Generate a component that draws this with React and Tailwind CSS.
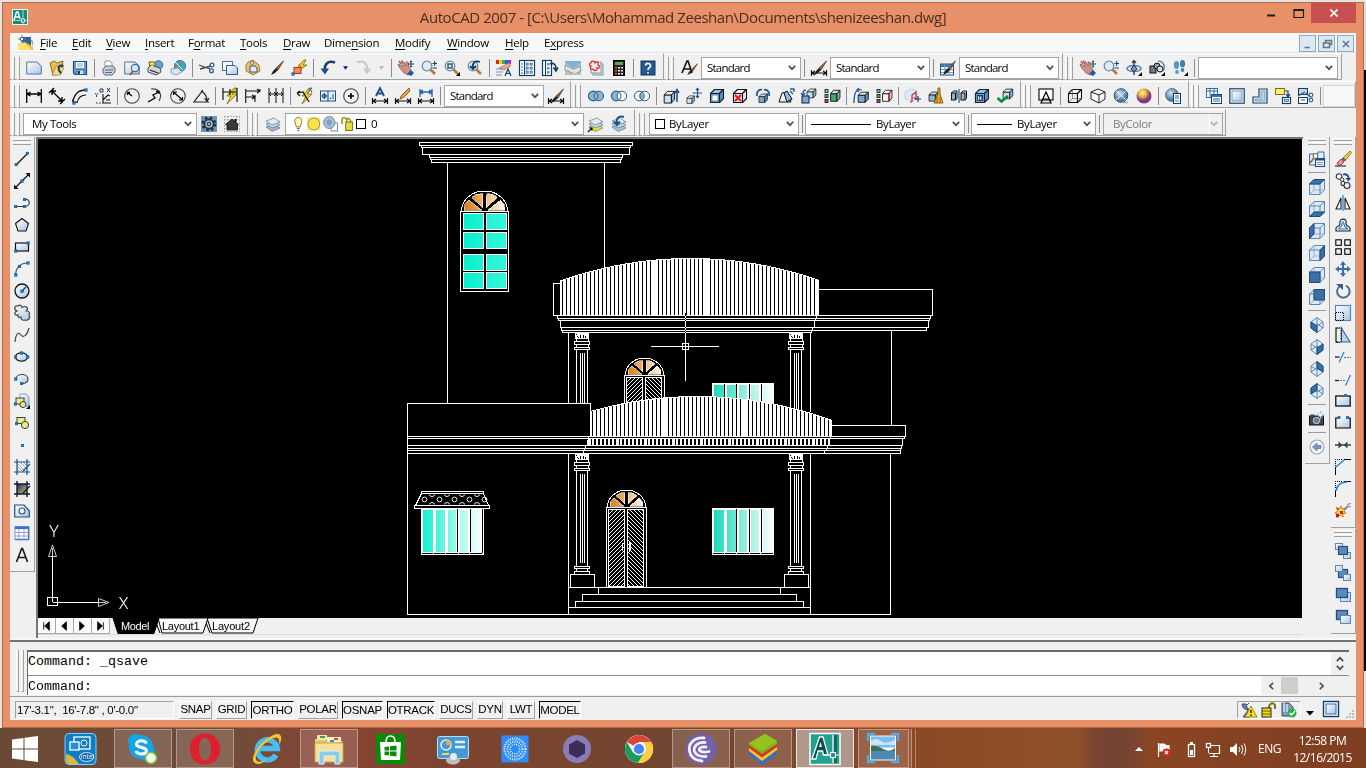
import React from "react";

const N = "#123e66";
const B = "#2f6ca8";
const P = "#b9d3ea";
const DOT = "#1583d8";

const R = (x, y, w, h, f = "none", s = "none", sw = 1, k) => (
  <rect key={k} x={x} y={y} width={w} height={h} fill={f} stroke={s} strokeWidth={sw} />
);
const D = (d, s = "#111", f = "none", sw = 1.2, k) => (
  <path key={k} d={d} stroke={s} fill={f} strokeWidth={sw} />
);
const C = (x, y, r, f = "none", s = "none", sw = 1, k) => (
  <circle key={k} cx={x} cy={y} r={r} fill={f} stroke={s} strokeWidth={sw} />
);
const Dot = (x, y, k) => R(x - 1.25, y - 1.25, 2.5, 2.5, DOT, "#0a4a88", 0.5, k);
const Corner = <path d="M16 12V16H12Z" fill="#000" />;

const cube = (front, top, side, stroke = "#111") => (
  <g stroke={stroke} strokeWidth="1.1" strokeLinejoin="round">
    <path d="M1.5 5.5H10.5V14.5H1.5Z" fill={front} />
    <path d="M1.5 5.5L5.5 1.5H14.5L10.5 5.5Z" fill={top} />
    <path d="M10.5 5.5L14.5 1.5V10.5L10.5 14.5Z" fill={side} />
  </g>
);
const viewCube = (face) => (
  <g stroke="#5c88b4" strokeWidth="1" strokeLinejoin="round">
    <path d="M.5 5L5 .5H15.5V11L11 15.5H.5Z" fill="#dce9f5" />
    <path d="M5 .5V11H15.5M5 11L.5 15.5" fill="none" stroke="#93b3d1" />
    <path d="M.5 5H11V15.5M11 5L15.5 .5" fill="none" />
    <path d={face} fill="#3d6fa5" stroke="#1d4c80" />
  </g>
);
const isoCube = (face) => (
  <g stroke="#5c88b4" strokeWidth="1" strokeLinejoin="round">
    <path d="M8 .5L14 5V11L8 15.5L2 11V5Z" fill="#e0ecf6" />
    <path d="M2 5L8 9L14 5M8 9V15.5M8 .5V7L2 11M8 7L14 11" fill="none" />
    <path d={face} fill="#3b6ea3" stroke="#1d4c80" />
  </g>
);
const hand = (
  <g>
    <path d="M1 1L3 4M3.500 .5L5 4" stroke="#a8665c" strokeWidth="1.6" />
    <path d="M0 4L3 5L5 7L4 2L6 2L8 6L8 2L10 2L11 7L13 10V13L10 15L6 13L1 7Z" fill="#cf9186" stroke="#8a544c" strokeWidth=".7" />
    <path d="M9 14L13 10L16 13L13 16Z" fill="#1e5c9a" />
    <path d="M13 1V7M10 4H16M12 2L13 .8L14 2M12 6L13 7.2L14 6" stroke={N} fill="none" strokeWidth="1" />
  </g>
);
const lens = (
  <g>
    <path d="M9.5 9.5L14 14" stroke="#c07830" strokeWidth="2.6" />
    <circle cx="6" cy="6" r="4.8" fill="#dcecf8" stroke="#6e8aa4" strokeWidth="1.3" />
  </g>
);
const brush = (
  <g>
    <path d="M15.5 1L8 8L10 10Z" fill="#a06a3c" stroke="#5a3418" strokeWidth=".8" />
    <path d="M8 8L10 10L7 13L3 15L5 11Z" fill="#222" />
  </g>
);
const dimBar = D("M.5 10V16M15.5 10V16M1 13H15M4 11L1 13L4 15M12 11L15 13L12 15", "#111");
const bolt = D("M12 0L5 8L9 8L5 16L15 6L10 6L15 0Z", "#6b5a00", "#f0d818", 0.7);
const pairs = () => [1.5, 6.5, 11.5].map((y, i) => R(1, y, 3, 3, ["#7cc4f0", "#4ec04e", "#d04040"][i], "#222", 0.9, y));
const doc = D("M.7 2H11L15.3 6V14H.7Z", "#4a78a4", "url(#face)", 1);
const lay = (f) => (
  <g stroke="#5a7590" strokeWidth=".7">
    <path d="M1 11L9 8L15 12L7 15.5Z" fill={f} />
    <path d="M1 8L9 5L15 9L7 12Z" fill="#c8daea" />
    <path d="M1 5L9 2L15 6L7 9Z" fill="#e3edf6" />
  </g>
);

const ICONS = {
  new: doc,
  open: (<g>{D("M1 3L5 1L8 3L14 1L12 14L4 15Z", "#8a6a20", "#e9bd4e", 1)}{D("M3 15L7 6L15 8L11 15Z", "#a58230", "#f7dc88", 0.8)}{D("M14.500 6C9 4 8 9 12 13", N, "none", 2)}</g>),
  save: (<g>{D("M1.5 1.5H14.5V14.5H3L1.5 13Z", "#1d4f85", "#6a9cca", 1.2)}{R(4, 2, 8, 6, "#f0f5fa")}{D("M5 4H11M5 6H11", "#7a98b4", "none", 0.8)}{R(5, 10, 7, 4.5, "#d5e2ee", "#1d4f85", 0.8)}{R(6, 11, 2, 3, N)}</g>),
  print: (<g>{D("M4 7V1H9L11 3V7", "#8a94b0", "#fff", 1)}{D("M2 9L5 6H12L14 8V12L11 15H4L2 13Z", "#5a6888", "#c8d0e2", 1)}{D("M4 10H12M4 12.500H11", "#5a6888", "#eef", 1)}{C(11.500, 9, 1, "#d8a020")}</g>),
  preview: (<g>{doc}<path d="M9 11L6 15" stroke="#a06020" strokeWidth="2" />{C(11, 8, 3.6, "#d8ebf8", "#48688a", 1.1)}</g>),
  publish: (<g>{C(11.5, 5, 4.3, "#58a8d8", "#1c5080", 0.8)}{D("M2 2H8V7H3Z", "#705818", "#ffe060", 1)}{D("M1 8L4 5L13 8L14 12L9 15L1 12Z", "#4a4a4a", "#d0d5dc", 1)}{D("M3 10L11 13", "#222", "none", 1.3)}{R(4, 4, 3, 2, "#e8b820")}</g>),
  globe: (<g>{C(10, 6, 5.6, "#3ba7c9", "#2168a0", 0.8)}{D("M8 1C12 3 11 6 7 6S6 10 10 12", "#c84848", "#62c070", 1)}{D("M5 2L13 10", "#d8eef8", "none", 1)}{D("M1 9L8 8L12 12L6 15L1 13Z", "#7892a8", "#d8e4ee", 0.8)}</g>),
  cut: (<g>{D("M0 5L11 9M1 9L12 6", "#445", "none", 1.3)}{C(13, 5, 1.9, "none", "#34589c", 1.3)}{C(12.5, 10.8, 1.9, "none", "#34589c", 1.3)}</g>),
  copy: (<g>{R(0.5, 1.5, 10, 9, "#eef4fa", "#4a78a4", 1)}{D("M4.5 5.5H13L15.5 8V14.5H4.5Z", "#2f5f90", "url(#face)", 1)}</g>),
  paste: (<g>{D("M3 2L8 0L14 5L15 11L8 15L1 11V5Z", "#a58238", "#eabf65", 1)}{D("M5 6H10L12 8V12H5Z", "#2f5f90", "#e2eef8", 1)}{C(7, 3, 1.5, "#f0f0f0", "#666", 0.8)}</g>),
  match: brush,
  block: (<g>{D("M13 0L7 6L10 6L7 11L16 5L12 5L15 0Z", "#8a6400", "#f7c928", 0.8)}{R(3, 7.5, 7, 6, "#f58a60", "#a03818", 1)}{Dot(2, 14)}</g>),
  undo: (<g>{D("M15 2.500C8 0 4 4 5 11", "#1c3f6a", "none", 2.6)}{D("M.5 8.500H9L5 14.500Z", "none", "#1c4f86", 0)}</g>),
  redo: (<g>{D("M1 2.500C8 0 12 4 11 11", "#c6cacd", "none", 2.2)}{D("M15.500 8.500H7L11 14.500Z", "none", "#c6cacd", 0)}</g>),
  pan: hand,
  zoom: (<g>{lens}{D("M11.5 3.5H16M13.7 1V6M11.5 8H16", N, "none", 1)}</g>),
  zoomwin: (<g>{lens}{R(4, 4, 4, 4, "none", N, 1.2)}{Corner}</g>),
  zoomprev: (<g>{lens}{D("M13 2C8 0 5 3 6 8M3 6L6 9L9 6", N, "none", 1.8)}</g>),
  props: (<g>{R(0, 0, 3, 4, "#e82020")}{R(3, 0, 3, 4, "#f0d020")}{R(6, 0, 3, 4, "#20c040")}{R(9, 0, 3, 4, "#2060e8")}{R(12, 0, 3, 4, "#c020c0")}{D("M3 8L13 3L15 6L8 10Z", "#b07868", "#e8a898", 0.8)}{D("M0 9H7M0 12H7M0 15H6", "#88b", "none", 1)}{D("M9 16L12 9L15 16M10 13.5H14", N, "none", 1.2)}</g>),
  dc: (<g>{R(0.5, 0.5, 15, 15, "#fff", N, 1.2)}{D("M5.5 1V15", N, "none", 1)}{D("M2 4H4M2 7H4M2 10H4M2 13H4", B, "none", 1.2)}{[7, 11].map((x) => [3, 7, 11].map((y) => R(x, y, 2.2, 2.2, "#8fb6dc", N, 0.5, x + y)))}</g>),
  palettes: (<g>{R(0.5, 0.5, 9, 15, "#fff", N, 1.2)}{D("M3.5 1V15", N, "none", 1)}{R(5, 3, 2.5, 2.5, "#5b93c8")}{R(5, 7, 2.5, 2.5, "#5b93c8")}{R(5, 11, 2.5, 2.5, "#5b93c8")}{D("M8 4C12 2 14 5 14 9M11.5 7.5L14 11L16 7.5", N, "none", 1.6)}</g>),
  sheets: (<g>{R(0, 1, 16, 14, "#a5c8dc")}{D("M0 2L8 8L16 3V1H0Z", "none", "#7fb2d2", 0)}{D("M0 5L9 9L15 6L16 11L10 14L0 10Z", "#8796a2", "#dde2e4", 1)}{R(0, 13, 16, 2, "#b8c4a0")}</g>),
  markup: (<g>{R(5, 4, 10, 11, "#dce6f0", "#8090a0", 1)}{R(3, 2, 10, 11, "#f0f4f8", "#8090a0", 1)}{D("M3 3C1 3 1 6 3 6C1 8 3 10 5 9C6 12 10 10 9 8C12 9 12 5 10 5C11 2 8 1 7 3C6 0 3 1 3 3Z", "#e22020", "#ffe8e8", 1.2)}</g>),
  calc: (<g>{R(2.5, 0.5, 11, 15, "#222", "#000", 1)}{R(4, 2, 8, 3, "#5aa850")}{[4, 7, 10].map((x) => [7, 10, 13].map((y) => R(x, y, 2, 1.5, x === 4 ? "#e05050" : "#eee", "none", 1, x * y)))}</g>),
  help: (<g>{R(1, 1, 14, 14, "#24598f", "#10345c", 1)}{D("M5.5 5.5C6 2.5 11 3 10.5 6C10 7.5 8 8 8 10M8 12V13.5", "#fff", "none", 1.7)}</g>),
  tstyle: (<g>{D("M1 13L6 1H7L11 13M3 9H9", "#111", "none", 1.6)}<g transform="translate(4 3) scale(.8)">{brush}</g></g>),
  dstyle: (<g>{brush}{dimBar}</g>),
  tablestyle: (<g>{R(0.5, 4, 13, 11, "#fff", "#1d4f90", 1)}{R(0.5, 4, 13, 3, "#3b74b8")}{D("M1 9.500H13M1 12.500H13M5 5V15M9 5V15", "#6b9ad0")}{brush}</g>),
  orbit: (<g>{D("M8 0V15M6 3L8 .5L10 3", "#345", "none", 1.4)}<ellipse cx="8" cy="8.5" rx="7" ry="3" fill="none" stroke="#4a86c0" strokeWidth="1.6" />{D("M5 9L8 5L11 9L8 12Z", "#235", "#88a", 1)}{Corner}</g>),
  swivel: (<g>{R(1, 6, 6, 7, "#778", "#111")}{C(8, 6, 3, "#99a", "#111")}{C(11, 9, 3, "#dde", "#111")}{D("M9 1C14 1 17 6 14 11", B)}{Corner}</g>),
  walk: (<g><ellipse cx="4.5" cy="5" rx="2.6" ry="4" fill="#5897bd" /><ellipse cx="10.5" cy="3.8" rx="2.6" ry="3.8" fill="#3f7fa8" /><ellipse cx="5" cy="12" rx="1.8" ry="2" fill="#5897bd" /><ellipse cx="10.5" cy="10" rx="1.8" ry="2" fill="#3f7fa8" />{Corner}</g>),
  dLinear: D("M.7 1V15M15.3 1V15M1 6H15M4.5 4L1 6L4.5 8M11.5 4L15 6L11.5 8", "#000", "none", 1.3),
  dAligned: D("M0 5L5 0M11 16L16 11M3 3L13 13M3 7V3H7M13 9V13H9", "#000", "none", 1.4),
  dArc: (<g>{D("M1 14C2 6 6 2 14 2", "#111", "none", 1.3)}{D("M5 15C6 10 9 7 14 7M1 11V14H5", "#111", "none", 1.1)}{Dot(2, 15)}{Dot(14, 2)}</g>),
  dOrd: (<g>{D("M8 6V15H16M8 12L13 7L15 8M11 12H15", "#111", "none", 1.1)}{D("M5 1H8V4H5ZM12 0L15 4M15 0L12 4", N, "none", 1)}<path d="M0 5L1.500 7L3 5M1.500 7V9M1 15H8" stroke="#446" fill="none" strokeDasharray="2 1" /></g>),
  dRad: (<g>{C(8, 8, 7.3, "none", "#444", 1.1)}{D("M8 8L3.5 4.5M3.5 7V4.5H6", "#000", "none", 1.3)}</g>),
  dJog: (<g>{D("M4 1C12 0 16 6 12 13", "#444", "none", 1.1)}{D("M1 14L8 10L6 7L12 4M9 3.5H12V6", "#000", "none", 1.3)}</g>),
  dDia: (<g>{C(8, 8, 7.3, "none", "#444", 1.1)}{D("M3.5 4L12.5 12M3.5 7V4H7M12.5 9V12H9", "#000", "none", 1.2)}</g>),
  dAng: D("M16 14H1L10 2M8 3C12 5 14 9 14 13M11.5 10L14 13.5L16 10", "#222", "none", 1.2),
  dQuick: (<g>{bolt}{D("M1 0V12M15 0V14M1 4H15M8 1V7", "#111", "none", 1.2)}</g>),
  dBase: D("M.7 1V15M.7 3H15M12 1L15 3L12 5M1 9H10M10 7V14M7 7L10 9L7 11M15 3V1", "#111", "none", 1.1),
  dCont: D("M1 0V15M8 0V15M15 0V15M1 6H15M3 4L1 6L3 8M13 4L15 6L13 8M6 4L8 6L6 8M10 4L8 6L10 8", "#111", "none", 1),
  qLeader: (<g>{bolt}{D("M0 5L6 4L12 14M0 5L3 3M0 5L3 8", "#111", "none", 1.2)}{D("M11 5L13 0L15 5", B, "none", 1)}</g>),
  tol: (<g>{R(0.5, 3, 15, 10, "#e8f1f9", "#1d4f85", 1)}{D("M8 3V13M4.3 5V11M1.5 8H7M13 6V11", "#1d4f85", "none", 1.1)}{C(4.3, 8, 2, "none", "#1d4f85", 1)}{D("M10.500 11V9.800", "#1d4f85", "none", 1.4)}</g>),
  center: (<g>{C(8, 8, 7.3, "none", "#444", 1.1)}{D("M8 5V11M5 8H11", "#000", "none", 1.6)}</g>),
  dEdit: (<g>{D("M4 8L8 0L12 8M5.5 5.5H10.5", "#1b4f90", "none", 1.9)}{dimBar}</g>),
  dtEdit: (<g>{D("M14 0L6 8L5 11L8 10L15 3Z", "#7a4a10", "#e8a040", 0.8)}{dimBar}</g>),
  dUpdate: (<g>{D("M2 1V9M14 1V9M2 4H14M5 2L2 4L5 6M11 2L14 4L11 6", "#2460a8", "none", 1.3)}{dimBar}</g>),
  union: (<g>{C(5.2, 8, 4.8, "#8bb6d2", "#2b5f88")}{C(10.8, 8, 4.8, "#8bb6d2", "#2b5f88")}{C(5.2, 8, 4.8, "none", "#2b5f88")}</g>),
  subtract: (<g>{C(5.2, 8, 4.8, "#8bb6d2", "#2b5f88")}{C(10.8, 8, 4.8, "#f4f8fb", "#2b5f88")}{C(5.2, 8, 4.8, "none", "#2b5f88")}</g>),
  intersect: (<g>{C(5.2, 8, 4.8, "#f4f8fb", "#2b5f88")}{C(10.8, 8, 4.8, "#f4f8fb", "#2b5f88")}{D("M8 4A4.8 4.8 0 0 1 8 12A4.8 4.8 0 0 1 8 4", "#2b5f88", "#8bb6d2", 1)}</g>),
  extrude: (<g><g transform="translate(0 2) scale(.8 .9)">{cube("#cfe0ef", "#eaf2f9", "#8db2d4")}</g>{D("M14 14V3M12 5L14 1.5L16 5", "#1d5a9a", "none", 1.6)}</g>),
  moveF: (<g><g transform="translate(0 7) scale(.58)">{cube("#cfe0ef", "#eaf2f9", "#8db2d4")}</g>{D("M11.5 0V10M6.5 5H16M10 2L11.5 .3L13 2M10 8L11.5 9.7L13 8", "#1d5a9a", "none", 1.2)}</g>),
  offsetF: (<g>{cube("#79a8d2", "#9cc1e2", "#5c90c2", "#123")}{R(3, 7, 6, 6, "#fff", "#46749e", 0.8)}</g>),
  delF: (<g>{cube("#f8dcdc", "#eef4fa", "#dce6f0")}{D("M3 7L9 13M9 7L3 13", "#d82020", "none", 2)}</g>),
  rotF: (<g><g transform="translate(3 5) scale(.65)">{cube("#79a8d2", "#cfe0ef", "#5c90c2")}</g>{D("M2 8C1 3 5 1 7 2M14 8C15 4 12 1 9 2", "#1d5a9a", "none", 1.8)}</g>),
  taperF: (<g>{D("M1 14L4 5L9 4L13 14ZM9 4L14 12", "#111", "#eef3f8", 1)}{D("M9 14L6 5L9 3L14 11Z", "#111", "#8fb6dc", 1)}{D("M12 3L15 6M12 1H16V4", "#1d5a9a", "none", 1.3)}</g>),
  copyF: (<g><g transform="translate(5 0) scale(.68)">{cube("#cfe0ef", "#eaf2f9", "#8db2d4")}</g>{R(1, 8, 7, 7, "#79a8d2", "#123")}{D("M5 2C2 2 2 4 2 7M0 5L2 8L4 5", "#1d5a9a", "none", 1.3)}</g>),
  colorF: (<g>{pairs()}<g transform="translate(5.500 1) scale(.72 .85)">{cube("#3fa86a", "#cfe0ef", "#8db2d4")}</g></g>),
  copyE: (<g><g transform="translate(4 3) scale(.78)">{cube("#79a8d2", "#cfe0ef", "#5c90c2")}</g>{D("M9 2C3 0 1 5 1 15M6 0L4 2L6 4", "#1d5a9a", "none", 1.3)}</g>),
  colorE: (<g>{pairs()}<g transform="translate(5.500 1) scale(.72 .85)">{cube("#fff", "#fff", "#fff")}</g>{D("M13.5 4.500V12", "#e02020", "none", 1.6)}</g>),
  imprint: (<g>{D("M0 4L6 1L12 3V10L7 13L0 11Z", "#b8d4ec", "#dceaf6", 1)}{D("M7 14V7L11 4V12M7 14H5M11 10H8", "#c82040", "none", 1.2)}{D("M13 8V14M10 11H16", N, "none", 1.2)}</g>),
  clean: (<g><g transform="translate(0 3) scale(.7)">{cube("#8fb4d6", "#cfe0ef", "#5c90c2")}</g>{D("M10 0H12V6L15 15H6L10 6Z", "#8a5a10", "#e8b030", 1)}{D("M9 9V15M12 9V15", "#a06010", "none", 1)}</g>),
  separate: (<g>{R(0.5, 5, 4, 7, "#8db2d4", "#111")}{D("M.5 5L2.500 3H6V10L4.500 12", "#111", "none", 1)}{R(10, 5, 4, 7, "#8db2d4", "#111")}{D("M10 5L12 3H15.500V10L14 12", "#111", "none", 1)}{D("M8 1V15", "#1d5a9a", "none", 1.2)}</g>),
  shell: (<g>{cube("#6fa2cf", "#9cc1e2", "#5c90c2", "#123")}{R(3.5, 7.5, 5, 5, "#c8dcee", "#123", 0.8)}{R(5.5, 8.5, 2, 3, "#fff", "#123", 0.6)}</g>),
  check: (<g><g transform="translate(5 0) scale(.74)">{cube("#cfe0ef", "#eaf2f9", "#8db2d4")}</g>{D("M.5 10L4.500 13.500L11 8", "#0a8a38", "none", 2.6)}</g>),
  vs2d: (<g>{R(1, 1, 14, 11, "#fff", "#000", 1.1)}{D("M3 15L8 4L13 15ZM5 11H11", "#000", "none", 1.2)}</g>),
  vs3dw: (<g>{cube("#e8eff7", "#fff", "#fff")}{D("M5.5 1.5V10.5H14.5M5.5 10.5L1.5 14.5", "#667", "none", 0.7)}</g>),
  vs3dh: D("M8 1L15 4V11L9 15L1 11V4ZM1 4L9 7L15 4M9 7V15", "#222", "#fff", 1),
  vsreal: (<g>{C(8, 7.5, 6.8, "url(#ball)", "#234", 0.8)}{D("M3 3L13 12M13 3L3 12", "#e4f0fa", "none", 1)}{D("M9 14.500H15", "#aaa", "none", 1.5)}</g>),
  vsconc: C(8, 8, 7.5, "url(#gold)"),
  vsman: (<g>{C(7, 7, 6.5, "url(#ball)", "#567", 0.8)}{R(8.5, 5.5, 7, 10, "#fff", N)}{D("M10 8H14M10 10H14M10 13H14", B, "none", 1.2)}</g>),
  vp1: (<g>{R(0.5, 0.5, 11, 9, "#fff", B)}{D("M.5 3H11M4 1V9M8 1V9", B, "none", 1)}{R(5.5, 6.5, 10, 9, "#fff", N)}{R(5.5, 6.5, 10, 2.4, B)}{D("M7 11H14M7 13H14", B)}</g>),
  vp2: (<g>{R(0.8, 0.8, 14.4, 14.4, "#fff", N, 1.2)}{R(3, 3, 10, 10, "url(#face)", "#6f9ac4", 1)}</g>),
  vp3: (<g>{D("M7 1H15V15H1V9H7Z", N, "#fff", 1.2)}{D("M9 3H13V13H3V11H9Z", "#6f9ac4", P, 1)}</g>),
  vp4: (<g>{R(0.5, 0.5, 9, 6, "#ffe97a", "#857000")}{D("M10 3H13V8M11 6L13 9L15 6", N)}{R(7.5, 9.5, 8, 6, "#fff", N, 1.2)}{R(9.5, 11.5, 4, 2, P, B, 0.8)}</g>),
  vp5: (<g>{R(0.5, 0.5, 9, 6, P, N)}{R(0.5, 9.5, 9, 6, "#fff", N)}{D("M0 8L7 4M8 5L12 9M3 12H7", "#456")}{C(13, 7, 1.8, "none", B, 1.2)}{C(13, 12, 1.8, "none", B, 1.2)}</g>),
  gear: (<g>{R(0, 0, 16, 16, "#6f93b6")}<circle cx="8" cy="8" r="6.300" fill="none" stroke="#1d2d3d" strokeWidth="2.2" strokeDasharray="2.500 2.450" />{C(8, 8, 4.6, "#b4bec8", "#1d2d3d", 1.6)}{C(8, 8, 1.9, "#8fb0cf", "#1d2d3d", 1)}</g>),
  home: (<g><path d="M.5 0V16M15.500 0V16M0 .5H16M0 15.500H16M3.500 0V16M12.500 0V16M0 3.500H16M0 12.500H16" stroke="#9aa4ae" strokeWidth=".8" strokeDasharray="2 1" />{D("M1.500 8.500L8 3L14.500 8.500H13.500V14H3V8.500Z", "#111", "#3a3a3a", 0.8)}{R(10.5, 3, 2, 3, "#111")}</g>),
  layers: lay("#9fb6cc"),
  layermake: (<g>{lay("#f0e020")}{D("M0 16L4 12M1.5 12H4V14.5", "#111", "none", 1.2)}</g>),
  layerprev: (<g>{lay("#a8bfd4")}{D("M13 1C7 -1 5 3 6 8M3 5.5L6 9L9 5.5", "#1c4f86", "none", 2)}</g>),
  line: (<g>{D("M2 14L14 2", "#111", "none", 1.2)}{Dot(2.2, 13.6)}{Dot(13.4, 2.4)}</g>),
  xline: (<g>{D("M1 15L15 1", "#111", "none", 1.2)}{D("M0 16V11.500L4.500 16ZM16 0V4.500L11.500 0Z", "none", "#111", 0)}{Dot(8, 8)}</g>),
  pline: (<g>{D("M2 11.500H10M10 4C17 4 17 11.500 10 11.500", "#333", "none", 1.1)}{Dot(1.6, 11.5)}{Dot(10.5, 11.5)}{Dot(10.5, 4.500)}</g>),
  polygon: D("M8 1.5L14.5 6.5L12 14H4L1.5 6.5Z", "#111", "url(#face)", 1.1),
  rect: (<g>{R(1.5, 4, 13, 8, "url(#face)", "#111", 1.2)}{Dot(1.8, 12)}{Dot(14.2, 4)}</g>),
  arc: (<g>{D("M1.5 14C2 7 6 2 14 2", "#555", "none", 1.2)}{Dot(1.8, 14)}{Dot(5.5, 5.5)}{Dot(14, 2)}</g>),
  circle: (<g>{C(8, 8, 7, "url(#face)", "#111", 1.3)}{D("M8 8L12 4", N, "none", 1.2)}{Dot(8, 8.3)}</g>),
  cloud: D("M3 6C-1 4 1 0 4 1C6 -1 8 1 8 2.500C12 0 15 3 12.500 6C15 6 16.500 8 15 10C17 13 14 16 11 15C8 16 7 14 7 12C5 13 3 11.500 4 10C0 11 0 7 3 6Z", "#444", "url(#face)", 1.2),
  spline: D("M1 15C2 5 5 5 7 8S13 9 15 1", "#444", "none", 1.2),
  ellipse: (<g><ellipse cx="7.5" cy="8" rx="6" ry="4.2" fill="url(#face)" stroke="#222" strokeWidth="1.2" />{Dot(1.5, 8)}{Dot(13.8, 8)}{Dot(7.5, 4)}</g>),
  earc: (<g>{D("M2 8C2 2 14 2 14 8C14 12 10 12.5 8 12.3", "#444", "url(#face)", 1.2)}{Dot(1.8, 8)}{Dot(7.6, 12.5)}</g>),
  insert: (<g>{D("M6 1H12L15 4V13H6Z", "#7fa0c0", "url(#face)", 1)}{R(2, 5, 8, 6, "#f4ec7a", "#345")}{C(9, 11.5, 3, "#ece884", "#345")}{Dot(1.4, 11)}{Corner}</g>),
  mkblock: (<g>{R(3, 2.5, 8, 6, "#f4ec7a", "#345")}{C(11, 10, 3.6, "#ece884", "#345")}{Dot(2.5, 8.6)}</g>),
  point: Dot(8.5, 8.5),
  hatch: (<g>{R(3, 3, 10, 10, "#fff")}{D("M3 4L12 13M3 7L9 13M3 10L6 13M6 3L13 10M9 3L13 7", "#579", "none", 0.7)}{D("M0 3H16M0 13H16M3 0V16M13 0V16M9 12L16 5", "#1c4f86", "none", 1.2)}</g>),
  gradient: (<g>{R(3, 3, 10, 10, "url(#dark)")}{D("M0 3H16M0 13H16M3 0V16M13 0V16M9 12L16 5", "#0a1c30", "none", 1.4)}</g>),
  region: (<g>{D("M.7 2H10L15.3 8V14H.7Z", "#1c4f86", "url(#face)", 1.2)}{C(8, 8, 3, "#e6eff8", "#456", 1.1)}</g>),
  table: (<g>{R(1, 1.5, 14, 13, "#fff", "#7d98cc", 1)}{R(1, 1.5, 14, 2.6, "#3a6fe0")}{D("M1 7.500H15M1 11H15M5 4V14M10 4V14", "#8ba4d4", "none", 1)}{D("M14.500 2V15M1 14.500H15", "#5a74a8", "none", 1.3)}</g>),
  mtext: D("M2.500 15L7.700 1.500H8.500L13.500 15M4.500 10.500H11.500", "#1a1a1a", "none", 1.6),
  nview: (<g>{D("M.5 3H9V1H15V14H.5Z", "#3a6b9c", "#e4eef7", 1)}{R(6.5, 7.5, 9, 8, "#fff", "#1c4f86", 1.1)}{R(6.5, 7.5, 9, 2, "#1c4f86")}{D("M8 11.500H14M8 13.500H14", "#5a8fc4", "none", 0.9)}{C(6.500, 5, 2.5, "#fff", "#555")}{D("M5 7L1 12", "#a06030", "none", 1.6)}</g>),
  top: viewCube("M.5 5L5 .5H15.5L11 5Z"),
  bottom: viewCube("M.5 15.5L5 11H15.5L11 15.5Z"),
  left: viewCube("M.5 5L5 .5V11L.5 15.5Z"),
  right: viewCube("M11 5L15.5 .5V11L11 15.5Z"),
  front: viewCube("M.5 5H11V15.5H.5Z"),
  back: viewCube("M5 .5H15.5V11H5Z"),
  sw: isoCube("M2 5L8 9V15.5L2 11Z"),
  se: isoCube("M8 9L14 5V11L8 15.5Z"),
  ne: isoCube("M8 .5L14 5V11L8 7Z"),
  nw: isoCube("M8 .5L2 5V11L8 7Z"),
  camera: (<g>{R(0.5, 5, 14, 9, "#3a4856", "#111")}{R(1.500, 3.500, 4, 2, "#445")}{C(7.500, 9.5, 3.2, "#6a7a8a", "#c8d0da")}{D("M11.500 0V8M7.500 4H15.500M9 1.5L14 6.5M14 1.5L9 6.5", "#8cc4f0", "none", 1)}{C(11.5, 4, 1.6, "#fff")}</g>),
  vback: (<g>{C(8, 8, 7, "#f6f9fc", "#8da4ba", 1.1)}{D("M3.5 8L8 4V6.5H12V9.5H8V12Z", "#5f7f9f", "#7d9bb8", 0.8)}</g>),
  erase: (<g>{D("M15 0L16.500 1.500L10 10L7 8Z", "#806010", "#f0cc40", 0.8)}{D("M6 8L9 11L6 14H3L2 12Z", "#a84a58", "#ec9494", 1)}{D("M7.5 7L10 9.5", "#46608a", "none", 2.2)}{D("M0 15H11", "#111", "none", 1)}</g>),
  copyobj: (<g>{C(4, 3.500, 2.8, "#fff", "#333", 1.1)}{C(7, 6.500, 1.8, "#fff", "#333")}{D("M8 1.500C12 .5 14 3 13.5 6", "#1c4f86", "none", 1.8)}{D("M10.500 5H16L13.500 8.500Z", "none", "#1c4f86", 0)}{C(8, 10.500, 2, "#fff", "#333", 1.1)}{C(12, 12.5, 3, "#e4ecf4", "#333", 1.1)}</g>),
  mirror: (<g>{D("M6 3V14H1ZM10 3V14H15Z", "#222", "#f5f5f5", 1.1)}{D("M8 0V16", "#1c7cd8", "none", 1.2)}</g>),
  offset: (<g>{D("M1 14V11C1 9 5 10 5 7C3 1 13 0 11 7C11 10 15 9 15 11V14Z", "#222", "none", 1.1)}{D("M3.5 12H13C13 11 9 11 9 7C9 4 7 4 7 7C7 10 4 11 3.5 12", "#1c7cd8", "none", 1.1)}</g>),
  array: (<g>{R(0.8, 0.8, 5.5, 5.5, "#eef3f8", "#000", 1.1)}{R(9.8, 0.8, 5.5, 5.5, "#eef3f8", "#000", 1.1)}{R(0.8, 9.8, 5.5, 5.5, "#eef3f8", "#000", 1.1)}{R(9.8, 9.8, 5.5, 5.5, "#eef3f8", "#000", 1.1)}</g>),
  move: (<g>{D("M8 2V14M2 8H14", "#3a6ea5", "none", 2)}{D("M5 4L8 0L11 4ZM5 12L8 16L11 12ZM4 5L0 8L4 11ZM12 5L16 8L12 11Z", "none", "#3a6ea5", 0)}</g>),
  rotate: (<g>{D("M5 3A6.3 6.3 0 1 0 11 2.6", "#4a6e94", "none", 2)}{D("M1 1H8V7Z", "none", "#3a6088", 0)}</g>),
  scale: (<g>{R(0.5, 0.5, 15, 15, "url(#face)", "#5a82a8", 1.1)}<path d="M1 7.500H8.500V15M.5 8V15.500H8" fill="none" stroke="#000" strokeDasharray="1 1" /></g>),
  stretch: (<g>{D("M6.500 1L15 15H6.500Z", "#3a6490", P, 1.1)}<path d="M6 .5V15.500H1" fill="none" stroke="#000" strokeDasharray="1.3 1.3" />{D("M5 1H1V15H4", "#000", "none", 1.1)}</g>),
  trim: (<g>{D("M0 8H4.500", "#111", "none", 1.2)}{D("M4 13.500L9 3", "#2f7cc8")}<path d="M9 8.500H16" stroke="#2f7cc8" strokeWidth="1" strokeDasharray="2 1" /></g>),
  extend: (<g>{D("M0 9.500H4", "#111", "none", 1.2)}<path d="M5 9.500H11" stroke="#2f7cc8" strokeWidth="1" strokeDasharray="2 1" />{D("M10.500 14.500L15.5 4", "#2f7cc8")}</g>),
  breakpt: (<g>{R(0.8, 3, 14.4, 10, "url(#face)", "#000", 1.2)}{R(9, 1, 3, 3, "#3a6ea5")}</g>),
  breakk: (<g>{D("M4 3H.8V13H15.2V3H13", "#000", "url(#face)", 1.2)}{R(2.5, 1, 3, 3, "#3a6ea5")}{R(11, 1, 3, 3, "#3a6ea5")}</g>),
  join: (<g>{D("M0 8H16", "#111")}{D("M3.500 4.500L7.500 8L3.500 11.500ZM12.500 4.500L8.500 8L12.500 11.500Z", "none", "#2c4660", 0)}</g>),
  chamfer: (<g>{D("M.5 8V16M9 .5H16", "#000", "none", 1)}{D("M1 8L9 1", "#1c7cd8", "none", 1.3)}<path d="M.5 7V.5H8" fill="none" stroke="#000" strokeDasharray="1 1" /></g>),
  fillet: (<g>{D("M.5 9V16M9 .5H16", "#000", "none", 1)}{D("M1 10C2 4 5 1 12 1", "#1c7cd8", "none", 1.5)}<path d="M.5 7V.5H8" fill="none" stroke="#000" strokeDasharray="1 1" /></g>),
  explode: (<g>{D("M1 4L4 6L6 3L7 6L10 5L9 8L11 10L8 11L8 14L5 12L2 15L3 11L0 10L3 8Z", "#c86010", "#f8dc50", 0.8)}{R(1, 11, 3, 3, "#d01818")}{R(5, 8, 3, 3, "#e02020")}{R(2, 5, 2, 2, "#e84020")}{D("M9 7L13 3", "#888", "none", 2)}{D("M12 1.500L16 .5M13 3L16 4", "#777", "none", 0.9)}</g>),
  df1: (<g>{R(0.5, 0.5, 7, 6, "url(#face)", "#5a88b4")}{R(8.5, 9.5, 7, 6, "url(#face)", "#5a88b4")}{R(3.5, 3.5, 9, 8, "#5b89ba", "#234f80", 1.2)}</g>),
  df2: (<g>{R(3.5, 4.5, 9, 8, "#5b89ba", "#234f80", 1.2)}{R(0.5, 0.5, 7, 6, "url(#face)", "#5a88b4")}{R(8.5, 9.5, 7, 6, "url(#face)", "#5a88b4")}</g>),
  df3: (<g>{R(5.5, 5.5, 10, 9, "url(#face)", "#5a88b4")}{R(1.5, 1.5, 11, 9, "#5b89ba", "#234f80", 1.3)}</g>),
  df4: (<g>{R(1.5, 1.5, 11, 9, "#5b89ba", "#234f80", 1.3)}{R(5.5, 6.5, 10, 8, "url(#face)", "#5a88b4")}</g>),
};

const Icon = ({ n }) => (
  <svg viewBox="0 0 16 16" className="h-4 w-4 shrink-0 overflow-visible">{ICONS[n]}</svg>
);
const Cell = ({ n }) => (
  <div className="flex h-[22px] w-[23px] shrink-0 items-center justify-center"><Icon n={n} /></div>
);
const Cells = ({ l }) =>
  l.split(" ").map((n, i) =>
    n === "|" ? <Sep key={i} /> : n === "v" || n === "w" ? <Tri key={i} off={n === "w"} /> : <Cell key={i} n={n} />
  );
const Sep = () => (
  <div className="flex h-[22px] w-1.5 shrink-0 justify-center py-0.5"><div className="w-px bg-[#8c8c8c]" /></div>
);
const Tri = ({ off }) => (
  <div className="flex h-[22px] w-[13px] shrink-0 items-center justify-center">
    <svg viewBox="0 0 6 4" className="h-[4px] w-[5px]"><path d="M0 0H6L3 4Z" fill={off ? "#b4b4b8" : "#10107c"} /></svg>
  </div>
);
const Grip = () => (
  <div className="ml-px flex h-[23px] w-[11px] shrink-0 gap-[2px] pl-px">
    <div className="w-[3px] border-r border-l border-r-[#a0a0a0] border-l-white" />
    <div className="w-[3px] border-r border-l border-r-[#a0a0a0] border-l-white" />
  </div>
);
const Chevron = ({ off }) => (
  <svg viewBox="0 0 8 6" className="h-[6px] w-[8px] shrink-0"><path d="M.8 .8L4 4.2L7.2 .8" fill="none" stroke={off ? "#b5b5b5" : "#505050"} strokeWidth="1.7" /></svg>
);
const Combo = ({ w, children, off }) => (
  <div className={`${w} ${off ? "bg-[#f0f0f0] text-[#7c7c7c]" : "bg-white text-black"} flex h-[22px] shrink-0 items-center justify-between border border-[#a5a5a8] pr-[4px] pl-[5px]`}>
    <div className="flex h-full min-w-0 flex-1 items-center whitespace-nowrap">{children}</div>
    <Chevron off={off} />
  </div>
);
const Bar = ({ w, children }) => (
  <div className={`${w} flex h-[27px] shrink-0 items-start border-t border-r border-b border-t-white border-r-[#a0a0a0] border-b-[#a0a0a0] pt-[3px]`}>
    <Grip />
    {children}
  </div>
);
const Swatch = () => <div className="h-[10px] w-[10px] shrink-0 border border-black bg-white" />;

const VGrip = () => (
  <div className="mx-[3px] mb-[3px] flex h-[8px] shrink-0 flex-col gap-[1px] pt-px">
    <div className="h-[3px] border-t border-b border-t-white border-b-[#a0a0a0]" />
    <div className="h-[3px] border-t border-b border-t-white border-b-[#a0a0a0]" />
  </div>
);
const VBar = ({ h, l }) => (
  <div className={`${h} flex w-[25px] shrink-0 flex-col border-r border-b border-r-[#a0a0a0] border-b-[#a0a0a0] bg-[#f0f0f0]`}>
    <VGrip />
    {l.split(" ").map((n, i) =>
      n === "|" ? (
        <div key={i} className="flex h-1.5 shrink-0 items-center px-[3px] pb-px"><div className="h-px w-full bg-[#9a9a9a]" /></div>
      ) : (
        <div key={i} className="flex h-[22px] shrink-0 items-center justify-center pr-px"><Icon n={n} /></div>
      )
    )}
  </div>
);

const MENUS = [
  ["", "F", "ile", "w-[32px]"], ["", "E", "dit", "w-[34px]"], ["", "V", "iew", "w-[39px]"], ["", "I", "nsert", "w-[43px]"],
  ["F", "o", "rmat", "w-[52px]"], ["", "T", "ools", "w-[43px]"], ["", "D", "raw", "w-[41px]"], ["Dime", "n", "sion", "w-[71px]"],
  ["", "M", "odify", "w-[52px]"], ["", "W", "indow", "w-[58px]"], ["", "H", "elp", "w-[39px]"], ["E", "x", "press", "w-[60px]"],
];

const arcY = (x, cx, top) => Math.round(top + 389 - Math.sqrt(389 * 389 - (x - cx) * (x - cx)));
function Canopy({ x0, x1, cx, top, base, solid }) {
  const bars = [];
  for (let x = x0; x <= x1; x += 1) {
    const y = arcY(x, cx, top);
    const black = (x - x0) % 4 === 2 && x < x1 - 1 && !solid.includes(x);
    bars.push(<rect key={x} x={x} y={y} width="1" height={black ? 1 : base - y} fill="#fff" />);
    if (black) bars.push(<rect key={`b${x}`} x={x} y={y + 1} width="1" height={base - y - 1} fill="#000" />);
  }
  return <g>{bars}</g>;
}
const box = (x0, y0, x1, y1) => <rect key={`${x0}-${y0}-${x1}`} x={x0 + 0.5} y={y0 + 0.5} width={x1 - x0} height={y1 - y0} fill="#000" stroke="#fff" />;
const vl = (x, y0, y1) => <path key={`v${x}-${y0}`} d={`M${x + 0.5} ${y0}V${y1}`} stroke="#fff" />;
const hl = (y, x0, x1) => <path key={`h${y}-${x0}`} d={`M${x0} ${y + 0.5}H${x1}`} stroke="#fff" />;

function Fan({ cx, base, rx, ry }) {
  const id = `fan${cx}`.replace(".", "-") + base;
  const p = (a, k) => `${(cx + Math.cos(a) * (rx - k)).toFixed(1)} ${(base - Math.sin(a) * (ry - k)).toFixed(1)}`;
  const cuts = [[3.1, 2.45, -3], [2.25, 1.67, -1.6], [1.47, 0.89, 1.6], [0.69, 0.04, 3]];
  return (
    <g>
      <defs>
        <linearGradient id={id} gradientUnits="userSpaceOnUse" x1={cx - rx} y1="0" x2={cx + rx} y2="0">
          <stop offset="0" stopColor="#da7b0e" /><stop offset=".2" stopColor="#e08c30" /><stop offset=".5" stopColor="#efb777" /><stop offset="1" stopColor="#fff" />
        </linearGradient>
      </defs>
      <path d={`M${cx - rx} ${base}A${rx} ${ry} 0 0 1 ${cx + rx} ${base}`} fill="#000" stroke="#fff" />
      {cuts.map(([a, b, dx], i) => (
        <path key={i} d={`M${cx + dx} ${base - (i === 1 || i === 2 ? 3 : 1)}L${p(a, 2.5)}L${p((a + b) / 2, 2)}L${p(b, 2.5)}Z`} fill={`url(#${id})`} stroke="#fff" strokeWidth=".6" />
      ))}
    </g>
  );
}
function Door({ x, top, y0, y1 }) {
  const lines = [];
  for (let y = y0 - 16; y < y1 + 16; y += 4) {
    lines.push(`M${x + 2} ${y + 16}L${x + 18} ${y}`);
    lines.push(`M${x + 21} ${y}L${x + 37} ${y + 16}`);
  }
  return (
    <g>
      <clipPath id={`d${x}`}><rect x={x + 2} y={y0 + 2} width="36" height={y1 - y0 - 3} /></clipPath>
      {box(x, y0, x + 40, y1)}
      <path d={lines.join("")} stroke="#fff" strokeWidth="1.15" fill="none" clipPath={`url(#d${x})`} />
      <rect x={x + 18.5} y={y0 + 1} width="2.5" height={y1 - y0 - 1} fill="#000" />
      <rect x={x + 2.5} y={y0 + 2.5} width="16" height={y1 - y0 - 3} fill="none" stroke="#fff" />
      <rect x={x + 21.5} y={y0 + 2.5} width="16" height={y1 - y0 - 3} fill="none" stroke="#fff" />
      <Fan cx={x + 20.5} base={y0} rx={19} ry={y0 - top} />
    </g>
  );
}
function Blinds({ x, y0, y1, cols, darks, g }) {
  return (
    <g>
      <rect x={x} y={y0} width="62" height={y1 - y0 + 1} fill="#fff" />
      {cols.map(([a, w], i) => <rect key={i} x={x + a} y={y0 + 2} width={w} height={y1 - y0 - 4} fill={`url(#${g})`} />)}
      {darks.map((a) => <rect key={a} x={x + a} y={y0 + 1} width="1" height={y1 - y0 - 3} fill="#000" />)}
      <path d={`M${x + 1} ${y1 - 0.5}H${x + 61}`} stroke="#000" />
      {[12, 24, 37, 48].map((a) => <rect key={`m${a}`} x={x + a} y={y1 - 1} width="1" height="1" fill="#fff" />)}
    </g>
  );
}
function Column({ x, y, end, foot }) {
  return (
    <g>
      <rect x={x - 1} y={y} width="14" height="6" fill="#fff" />
      <path d={`M${x + 1} ${y + 3}l2 2M${x + 4} ${y + 2}v3M${x + 7} ${y + 2}v3M${x + 10} ${y + 3}l-1 2M${x} ${y + 1}l1 1`} stroke="#000" fill="none" />
      {box(x, y + 5, x + 12, y + 9)}
      {box(x, y + 11, x + 12, y + 14)}
      {box(x, y + 16, x + 11, end)}
      {box(x - 2, y + 8, x + 13, y + 11)}
      {box(x - 2, y + 14, x + 13, y + 16)}
      {vl(x + 4, y + 20, end - 3)}{vl(x + 6, y + 20, end - 3)}{vl(x + 8, y + 20, end - 3)}
      {foot && <g>{box(x, end + 2, x + 11, end + 5)}{box(x - 2, end, x + 13, end + 2)}{box(x - 2, end + 5, x + 13, end + 8)}{box(x - 6, 574, x + 18, 587)}</g>}
    </g>
  );
}

function Drawing() {
  const COLS = [[2, 10], [15, 9], [27, 8], [39, 8], [51, 9]];
  const fringe = [];
  for (let x = 588; x < 829; x += 4) fringe.push(<rect key={x} x={x} y="439" width={x % 28 === 0 ? 3 : 2} height="6" fill="#fff" />);
  return (
    <svg viewBox="38 139 1264 479" className="block h-[479px] w-[1264px] bg-black" fill="none" shapeRendering="crispEdges">
      <defs>
        <linearGradient id="teal1" gradientUnits="userSpaceOnUse" x1="422" y1="0" x2="482" y2="0"><stop offset="0" stopColor="#10efcf" /><stop offset="1" stopColor="#fff" /></linearGradient>
        <linearGradient id="teal2" gradientUnits="userSpaceOnUse" x1="713" y1="0" x2="773" y2="0"><stop offset="0" stopColor="#17d9b8" /><stop offset="1" stopColor="#fff" /></linearGradient>
        <linearGradient id="pane" gradientUnits="userSpaceOnUse" x1="463" y1="0" x2="507" y2="0"><stop offset="0" stopColor="#08f0cc" /><stop offset="1" stopColor="#36f5dc" /></linearGradient>
      </defs>
      {/* tower */}
      {box(419, 142, 632, 145)}{box(421, 145, 630, 147)}{box(422, 147, 629, 154)}{box(429, 154, 622, 157)}{box(430, 157, 621, 159)}{box(431, 159, 620, 162)}
      {vl(447, 162, 403)}{vl(604, 162, 268)}
      {box(460, 211, 508, 291)}
      <Fan cx={484.5} base={211} rx={23} ry={20} />
      {[213, 232, 254, 272].map((y) => [463, 486].map((x) => <rect key={x + y} x={x + 0.5} y={y + 0.5} width="20" height="16" fill="url(#pane)" stroke="#fff" />))}
      {/* upper storey */}
      {vl(568, 332, 403)}{vl(810, 332, 412)}{vl(891, 330, 425)}
      {box(553, 283, 560, 315)}
      {box(818, 289, 932, 315)}
      {box(557, 315, 930, 318)}{box(558, 318, 929, 320)}{box(560, 320, 928, 327)}{box(561, 327, 926, 330)}{box(562, 330, 811, 332)}
      {vl(816, 315, 318)}{vl(815, 318, 320)}{vl(814, 320, 327)}{vl(812, 327, 330)}
      <Canopy x0={560} x1={818} cx={690} top={258} base={315} solid={[654, 706]} />
      <Column x={576} y={333} end={420} />
      <Column x={790} y={333} end={430} />
      <Door x={624} top={358} y0={375} y1={420} />
      <Blinds x={712} y0={383} y1={429} cols={COLS} darks={[12, 24, 37, 49]} g="teal2" />
      {/* lower storey */}
      {box(407, 403, 590, 436)}
      {box(831, 425, 905, 436)}
      {box(407, 436, 904, 438)}{box(407, 438, 902, 445)}{box(407, 445, 901, 448)}{box(407, 448, 900, 450)}{box(407, 450, 900, 453)}
      <Canopy x0={590} x1={831} cx={697} top={396} base={436} solid={[664, 744]} />
      {hl(436, 590, 832)}
      {fringe}
      {vl(588, 436, 440)}{vl(587, 440, 445)}{vl(585, 445, 448)}{vl(584, 448, 450)}{vl(583, 450, 453)}
      {vl(830, 436, 438)}{vl(829, 438, 445)}{vl(827, 445, 448)}{vl(826, 448, 450)}{vl(824, 450, 453)}
      {vl(407, 453, 614)}{vl(568, 453, 614)}{vl(810, 453, 614)}{vl(890, 453, 614)}{hl(614, 407, 891)}
      <Column x={576} y={454} end={566} foot />
      <Column x={790} y={454} end={566} foot />
      <Door x={606} top={490} y0={507} y1={587} />
      <path d="M622.5 543V551M629.5 542V552M630.5 543V551" stroke="#fff" /><path d="M624.5 544V551" stroke="#fff" />
      <Blinds x={712} y0={508} y1={554} cols={COLS} darks={[24, 37, 49]} g="teal2" />
      {/* steps */}
      {hl(587, 568, 811)}{hl(594, 582, 797)}{hl(601, 575, 804)}{hl(607, 568, 811)}
      {vl(598, 587, 594)}{vl(780, 587, 594)}{vl(582, 594, 601)}{vl(796, 594, 601)}{vl(575, 601, 607)}{vl(803, 601, 607)}
      {/* awning window */}
      <Blinds x={421} y0={508} y1={554} cols={[[2, 10], [15, 9], [27, 8], [39, 8], [50, 10]]} darks={[36, 49]} g="teal1" />
      <rect x="482" y="509" width="1" height="44" fill="#000" /><rect x="483" y="508" width="1" height="47" fill="#fff" />
      <path d="M421.5 493.5L415.5 505.5M483.5 493.5L488.5 505.5" stroke="#fff" />
      {box(421, 491, 483, 493)}{box(414, 505, 489, 508)}
      {[424, 439, 454, 469, 484].map((x) => <circle key={x} cx={x + 0.5} cy="499.5" r="2.4" stroke="#fff" shapeRendering="auto" strokeWidth=".9" />)}
      {[432, 447, 462, 477].map((x) => <path key={x} d={`M${x - 2.5} 494.500A2.500 2 0 0 0 ${x + 2.5} 494.500M${x - 2.5} 504.500A2.500 2 0 0 1 ${x + 2.5} 504.500`} stroke="#fff" shapeRendering="auto" strokeWidth=".9" />)}
      {/* crosshair */}
      <g className="mix-blend-difference" stroke="#fff"><path d="M685.5 313V343M685.5 350V381M651 346.5H682M689 346.5H719" /><rect x="682.5" y="343.5" width="6" height="6" /><path d="M685.5 344V349M683 346.5H688" /></g>
      {/* axis marker */}
      <g stroke="#fff"><rect x="47.5" y="597.5" width="10" height="8" /><path d="M52.5 602V556M52.5 602.5H98" /><path d="M48.5 556.5H56.5L52.5 545ZM98.5 598.5V606.5L109 602.5ZM52.500 556V548M98.500 602.500H106" shapeRendering="auto" strokeWidth=".8" /></g>
      <g fill="#fff" fontFamily="Roboto, sans-serif" fontWeight="300" fontSize="16.5"><text x="49" y="536.5">Y</text><text x="118.500" y="609">X</text></g>
    </svg>
  );
}

const Status = ({ t, w, on }) => (
  <div className={`${w} ${on ? "border-t-black border-l-black border-r-white border-b-white pt-[2px]" : "border-t-white border-l-white border-r-[#a0a0a0] border-b-[#a0a0a0]"} flex h-[18px] shrink-0 items-center justify-center border text-[11.5px] leading-none tracking-[-0.3px]`}>{t}</div>
);

const Task = ({ children, w = "w-[58px]", box, active }) => (
  <div className={`${w} ${active ? "border-[#efe4df] bg-[#b0978d]" : box ? "border-white/35 bg-white/15" : "border-transparent"} mr-1 flex h-[39px] shrink-0 items-center justify-center border`}>
    <svg viewBox="0 0 32 32" className="h-8 w-8 overflow-visible">{children}</svg>
  </div>
);

function Taskbar() {
  return (
    <div className="flex h-10 w-[1366px] items-start bg-[linear-gradient(90deg,#6b4937_0%,#724c39_18%,#8a4434_24%,#7d4531_32%,#71452f_50%,#8b4826_66%,#91502c_79%,#7a4530_80%,#704435_81.5%,#7a4430_83%,#8a4524_84%,#7e3e22_100%)] pt-px text-white">
      <div className="flex h-[39px] w-[48px] items-center pl-[12px]">
        <svg viewBox="0 0 26 26" className="h-[26px] w-[26px]"><path d="M0 3.5L11.5 2V12.5H0ZM12.5 1.8L26 0V12.5H12.5ZM0 13.5H11.5V24L0 22.5ZM12.5 13.5H26V26L12.5 24.2Z" fill="#fff" /></svg>
      </div>
      <div className="w-[4px]" />
      <Task>
        <rect x="0" y="0.500" width="31" height="31" rx="4" fill="#0f7cc6" stroke="#7ecff4" /><path d="M1 21Q8 22 14 31H4Q1 31 1 27Z" fill="#d9b93a" />
        <rect x="9" y="4" width="16" height="12" fill="none" stroke="#fff" strokeWidth="1.3" /><rect x="5" y="9" width="9" height="8" fill="#1f8ed8" stroke="#fff" strokeWidth="1.3" /><circle cx="19" cy="10" r="3" stroke="#fff" fill="none" />
        <ellipse cx="21.5" cy="24" rx="7" ry="4.500" fill="#1266b0" stroke="#fff" strokeWidth=".8" /><text x="16" y="26" fontSize="6.500" fill="#fff" fontFamily="Open Sans, sans-serif">intel</text>
      </Task>
      <Task box>
        <circle cx="14" cy="14" r="12" fill="#12a5e8" /><circle cx="8.5" cy="8.500" r="7.500" fill="#12a5e8" /><circle cx="20" cy="20" r="8" fill="#12a5e8" />
        <path d="M19.5 10.5C18 6.5 9 7 9.5 11.5C10 15.5 20 13.5 19.5 18C19 22 10.5 22 9 18" fill="none" stroke="#fff" strokeWidth="3" /><circle cx="24" cy="25" r="5.5" fill="#f4ffee" stroke="#7cc142" strokeWidth="1.5" />
      </Task>
      <Task box><path fillRule="evenodd" d="M16 0.500C25 0.500 31 7 31 16S25 31.500 16 31.500S1 25 1 16S7 0.500 16 0.500ZM16 4.500C12 4.500 10 10 10 16S12 27.500 16 27.500S22 22 22 16S20 4.500 16 4.500Z" fill="#e01e2c" /></Task>
      <Task>
        <path d="M25 22A10 10 0 1 1 26.300 15.500H9" fill="none" stroke="#49bdf2" strokeWidth="5.400" /><path d="M4 30C-4 25 13 4 25 1C32 0 31 7 28 12C29 6 27 3 23 5C13 8 1 23 6 28C9 30 13 28 16 26C11 31 7 32 4 30Z" fill="#f7c52c" />
      </Task>
      <Task box>
        <path d="M2 6H12L14 8H29V28H2Z" fill="#e8c76a" /><rect x="4" y="2" width="10" height="5" fill="#f4e3a4" /><rect x="7" y="3" width="5" height="2" fill="#3aa655" /><rect x="14" y="4" width="14" height="5" fill="#fff3c0" /><rect x="21" y="5" width="4" height="2" fill="#d84030" /><rect x="17" y="7" width="4" height="2" fill="#3f7fd0" />
        <path d="M2 10H30V29H2Z" fill="#f6e19a" stroke="#c9a64c" /><path d="M6 31V21Q6 18 9 18H24Q27 18 27 21V31H22V23H11V31Z" fill="#8ccbe8" stroke="#d9f1fb" />
      </Task>
      <Task><rect x="1" y="1" width="29" height="30" fill="#078c07" /><path d="M11 9Q11 3 15.500 3T20 9" fill="none" stroke="#fff" strokeWidth="1.600" /><path d="M5 9H26L25 27H6Z" fill="#fff" /><path d="M9.500 14L14 13.400V17.500H9.500ZM15 13.200L21.500 12.500V17.500H15ZM9.500 18.500H14V22.600L9.500 22ZM15 18.500H21.500V23.600L15 22.800Z" fill="#078c07" /></Task>
      <Task>
        <rect x="0.500" y="3.500" width="31" height="22" rx="2" fill="#4398d6" stroke="#b7def6" /><circle cx="9" cy="12" r="5" fill="none" stroke="#e4f2fb" strokeWidth="1.500" /><path d="M9 12V7A5 5 0 0 1 14 12Z" fill="#f2a63a" /><path d="M18 9H28M18 14H28" stroke="#dff0fb" strokeWidth="2.600" /><path d="M5 21H12" stroke="#f2d060" strokeWidth="2" /><ellipse cx="16" cy="27.500" rx="7" ry="4" fill="#b9bfc5" /><circle cx="16.500" cy="23.500" r="3.500" fill="#e8ebee" />
      </Task>
      <Task><rect x="2.500" y="2.500" width="27" height="27" fill="#2d8cf5" /><g fill="none" stroke="#d6e9ff" strokeDasharray="1.200 1.100"><circle cx="16" cy="16" r="10.500" strokeWidth="2.200" /><circle cx="16" cy="16" r="7.500" strokeWidth="1.800" /><circle cx="16" cy="16" r="4.800" strokeWidth="1.400" /></g></Task>
      <Task><circle cx="16" cy="16" r="14" fill="#8b7cb8" /><path d="M16 7L24 11.500V20.500L16 25L8 20.500V11.500Z" fill="#3a2e56" /></Task>
      <Task><circle cx="16" cy="16" r="14" fill="#fff" /><path d="M16 16L3.900 9A14 14 0 0 1 28.100 9H16Z" fill="#dc4437" /><path d="M3.900 9A14 14 0 0 0 15 30L21.500 19.500L16 22L10 19.500Z" fill="#1a9d58" /><path d="M28.200 9A14 14 0 0 1 15 30L22 19.500Q24 14 20 9Z" fill="#fecd40" /><circle cx="16" cy="16" r="6.500" fill="#f4f4f4" /><circle cx="16" cy="16" r="5.100" fill="#4285f4" /></Task>
      <Task box><circle cx="16" cy="16" r="15.500" fill="#7361ab" /><g fill="none" stroke="#f2effa" strokeWidth="2.800" strokeLinecap="round"><path d="M19 5C9 4 3 11 4.500 18Q6 27 17 28" /><path d="M20 9.500C12 9 8 14 9.500 18.500Q12 24 21 23.500" /><path d="M21 14C16 13.500 13.500 15 14.500 17.500Q17 20 24 18.500" /></g></Task>
      <Task box><path d="M2 22L15 31.500L30 21V17L2 18Z" fill="#2f6fd0" /><path d="M2 18L15 28L30 17V13L2 14Z" fill="#f6c71c" /><path d="M2 15L15 24.500L30 14V10L2 11Z" fill="#d8322c" /><path d="M2 10L18 1L30 8V11L15 21L2 12Z" fill="#7cb518" /><path d="M2 10L18 1L30 8L15 18Z" fill="#93c41c" /></Task>
      <Task active><rect x="1" y="0.500" width="30" height="31" fill="#23a08f" stroke="#fff" strokeWidth="1.500" /><path d="M3 26L10.500 4H14L19 22H14.500L13.500 18H9L7 26Z" fill="#0c4f49" stroke="#f2fffc" strokeWidth="1.300" /><path d="M10 14L11.500 9L13 14Z" fill="#e9fffa" /><path d="M26.500 2V30" stroke="#0f6b60" strokeWidth="3" /><path d="M24 2V30M15 22H30" stroke="#fff" strokeWidth="1.200" /><rect x="21.500" y="19.500" width="5" height="5" fill="#158f80" stroke="#fff" strokeWidth="1.200" /></Task>
      <Task w="w-[51px]" box><g transform="translate(-1 0)"><rect x="3" y="2.500" width="26" height="25" fill="#f4f8fa" /><rect x="4" y="3.500" width="24" height="11" fill="#7cbcf0" /><path d="M4 8Q10 4 14 8T28 7V12H4Z" fill="#c9e4f8" /><path d="M4 13Q9 12 16 16T28 15V20H4Z" fill="#3f7050" /><rect x="4" y="18" width="24" height="8.500" fill="#4a8ab4" /><path d="M1 8V1H8M24 1H31V8M1 22V29H8M24 29H31V22" fill="none" stroke="#52a8e6" strokeWidth="2.400" /></g></Task>
      <div className="-ml-1 flex h-[39px] w-[7px] gap-0.5"><div className="w-[3px] border-r border-white/35 bg-white/10" /><div className="w-[2px] border-r border-white/35" /></div>
      <div className="ml-auto flex h-[39px] items-center">
        <svg viewBox="0 0 120 20" className="h-5 w-[120px]" fill="none">
          <path d="M5 12H13L9 8Z" fill="#fff" />
          <path d="M28.500 4V18M30 5H34L36 6.500H39V12H30Z" stroke="#fff" fill="#fff" strokeWidth="1.200" /><circle cx="36.500" cy="13.500" r="4" fill="#e02424" /><path d="M35 12L38 15M38 12L35 15" stroke="#fff" strokeWidth="1.300" />
          <rect x="58.500" y="5.500" width="6" height="12" stroke="#fff" strokeWidth="1.300" /><path d="M60 4H63" stroke="#fff" strokeWidth="2" /><rect x="60" y="11" width="3" height="5" fill="#fff" />
          <path d="M81 6.500H89.500V14.500H79M84 14.500V17M80 17.500H88" stroke="#fff" strokeWidth="1.200" /><rect x="76.500" y="4.500" width="4" height="4" stroke="#fff" strokeWidth="1.200" /><path d="M78.500 9V14" stroke="#fff" />
          <path d="M100 8H103L107 4V17L103 13H100Z" fill="#fff" /><path d="M109 8Q111 10.500 109 13M111.500 6Q114.500 10.500 111.500 15M114 4.500Q117.500 10.500 114 16.500" stroke="#fff" />
        </svg>
        <div className="w-[38px] pl-[8px] font-['Open_Sans',sans-serif] text-[12px] tracking-[-0.5px]">ENG</div>
        <div className="w-[69px] text-center font-['Open_Sans',sans-serif] text-[12px] leading-[17px] tracking-[-0.5px]">
          <div>12:58 PM</div><div className="whitespace-nowrap">12/16/2015</div>
        </div>
        <div className="w-[9px]" />
      </div>
    </div>
  );
}

export default function App() {
  return (
    <div className="flex h-[768px] w-[1366px] flex-col overflow-hidden bg-[#e4e4e5] font-['Open_Sans','Noto_Sans',sans-serif] text-[11.5px] text-black">
      <svg className="absolute h-0 w-0">
        <defs>
          <linearGradient id="face" x1="0" y1="0" x2="1" y2="1"><stop offset="0" stopColor="#fff" /><stop offset="1" stopColor="#a9c6e2" /></linearGradient>
          <linearGradient id="dark" x1="0" y1="0" x2="1" y2="1"><stop offset="0" stopColor="#1a2a80" /><stop offset="1" stopColor="#d8c838" /></linearGradient>
          <radialGradient id="ball" cx=".4" cy=".35"><stop offset="0" stopColor="#cfe6f6" /><stop offset="1" stopColor="#4a7ca6" /></radialGradient>
          <radialGradient id="gold" cx=".4" cy=".3"><stop offset="0" stopColor="#fff6b0" /><stop offset=".5" stopColor="#f2b32c" /><stop offset="1" stopColor="#7a3a90" /></radialGradient>
        </defs>
      </svg>
      <div className="flex h-[728px] pt-[2px] pl-[2px]">
        <div className="flex h-[726px] w-[1362px] shrink-0 flex-col border border-[#b5683f] bg-[#e89068] px-[7px] pb-[7px]">
          <div className="flex h-[30px] shrink-0 items-start justify-between">
            <svg viewBox="0 0 16 16" className="mt-[6px] ml-[2px] h-4 w-4">
              <rect x=".5" y=".5" width="15" height="15" fill="#158a7a" stroke="#e6f5f2" /><path d="M2 11L4.500 3H6L8 10M3 8H7" stroke="#fff" strokeWidth="1.400" fill="none" /><path d="M11 1V15M1 11.500H15" stroke="#cfeee8" strokeWidth=".8" /><rect x="9.500" y="10" width="3" height="3" fill="#158a7a" stroke="#fff" strokeWidth=".9" />
            </svg>
            <div className="mt-[3px] ml-[87px] w-[540px] text-center text-[15px] leading-[22px] tracking-[-0.43px] whitespace-nowrap text-[#463026]">AutoCAD 2007 - [C:\Users\Mohammad Zeeshan\Documents\shenizeeshan.dwg]</div>
            <div className="flex h-5 items-start">
              <svg viewBox="0 0 60 20" className="h-5 w-[60px]"><path d="M16 12.500H24" stroke="#1c1c1c" strokeWidth="2" /><path d="M43 8V14.500H52.500V7M42.500 7H53" stroke="#1c1c1c" fill="none" strokeWidth="1.200" /><path d="M42.500 7H53" stroke="#1c1c1c" strokeWidth="2" /></svg>
              <div className="flex h-5 w-[45px] items-center justify-center bg-[#c75050]"><svg viewBox="0 0 8 8" className="h-2 w-2"><path d="M.5 .5L7.500 7.500M7.500 .5L.5 7.500" stroke="#fff" strokeWidth="1.600" /></svg></div>
            </div>
          </div>

          <div className="flex h-[687px] w-[1346px] shrink-0 flex-col overflow-hidden bg-[#f0f0f0]">
            <div className="flex h-5 shrink-0 items-center border-b border-[#e2e2e6] bg-[#f5f7f9]">
              <svg viewBox="0 0 16 16" className="ml-2 h-4 w-4"><rect x="4" y="2" width="9" height="9" fill="#2f6294" /><path d="M4 0V8M0 4H8" stroke="#5a8cbc" strokeWidth="1" /><circle cx="4" cy="4" r="1.800" fill="#fff" stroke="#2c5c8c" /><path d="M12 3L15 6V12" fill="#8ab" /><path d="M0 9L7 7L15 12V15H1Z" fill="#f0c030" /><path d="M0 9L7 8L14 15H1Z" fill="#ffe070" /></svg>
              <div className="flex pl-[6px] text-[11.5px] tracking-[-0.28px]">
                {MENUS.map(([a, u, b, w]) => (
                  <div key={u + b} className={`${w} shrink-0 whitespace-nowrap`}>{a}<span className="underline underline-offset-2">{u}</span>{b}</div>
                ))}
              </div>
              <div className="mt-[2px] mr-[2px] ml-auto flex gap-[2px]">
                {["M3.500 10.500H9", "M5.500 5.500V3.500H11.500V7.500H9.500M3.500 6H9.500V10.500H3.500Z", "M4 4L10 10M10 4L4 10"].map((d) => (
                  <div key={d} className="flex h-[17px] w-[17px] items-center justify-center border border-[#92a9c0] bg-[#dce8f4]"><svg viewBox="0 0 14 14" className="h-[14px] w-[14px]"><path d={d} stroke="#5f7992" strokeWidth="1.600" fill="none" /></svg></div>
                ))}
              </div>
            </div>

            <div className="flex h-7 shrink-0 text-[11.5px] tracking-[-0.78px]">
              <Bar w="w-[654px]"><Cells l="new open save | print preview publish globe | cut copy paste match block | undo v redo w | pan zoom zoomwin zoomprev | props dc palettes sheets markup calc | help" /></Bar>
              <Bar w="w-[399px]"><div className="w-px" /><Cells l="tstyle" /><div className="w-px" /><Combo w="w-[100px]">Standard</Combo><Sep /><Cells l="dstyle" /><Combo w="w-[100px]">Standard</Combo><Sep /><Cells l="tablestyle" /><Combo w="w-[100px]">Standard</Combo></Bar>
              <Bar w="w-[279px]"><div className="w-px" /><Cells l="pan zoom orbit swivel walk |" /><div className="w-px" /><Combo w="w-[140px]" /></Bar>
            </div>
            <div className="flex h-7 shrink-0 text-[11.5px] tracking-[-0.78px]">
              <Bar w="w-[561px]"><Cells l="dLinear dAligned dArc dOrd | dRad dJog dDia dAng | dQuick dBase dCont | qLeader tol center | dEdit dtEdit dUpdate |" /><div className="w-px" /><Combo w="w-[100px]">Standard</Combo><Cells l="dstyle" /></Bar>
              <Bar w="w-[450px]"><div className="w-px" /><Cells l="union subtract intersect | extrude moveF offsetF delF rotF taperF copyF colorF | copyE colorE | imprint clean separate shell check" /></Bar>
              <Bar w="w-[168px]"><div className="w-px" /><Cells l="vs2d | vs3dw vs3dh vsreal vsconc | vsman" /></Bar>
              <Bar w="w-[167px]"><div className="w-px" /><Cells l="vp1 vp2 vp3 vp4 vp5 |" /><div className="h-[22px] flex-1 border border-[#d4d4d4] bg-[#f7f7f7]" /></Bar>
            </div>
            <div className="flex h-7 shrink-0 text-[11.5px] tracking-[-0.4px]">
              <Bar w="w-[238px]"><div className="w-px" /><Combo w="w-[174px]"><span className="pl-[3px]">My Tools</span></Combo><Cells l="gear home" /></Bar>
              <Bar w="w-[387px]">
                <div className="w-px" /><Cells l="layers" /><div className="w-px" />
                <Combo w="w-[299px]">
                  <svg viewBox="0 0 68 16" className="mr-[3px] h-4 w-[62px]" preserveAspectRatio="none">
                    <path d="M8 1.500C4.500 1.500 3 5 5 8L6 11H10L11 8C13 5 11.500 1.500 8 1.500Z" fill="#fff9b0" stroke="#7a7030" /><path d="M6.500 12.500H9.500M7 14.500H9" stroke="#555" />
                    <rect x="18" y="1.500" width="14" height="13" fill="#f8ec50" /><ellipse cx="25" cy="8" rx="6.500" ry="6" fill="#ffe338" stroke="#7890a8" />
                    <rect x="44" y="7" width="7" height="8" fill="#fff" stroke="#789" /><ellipse cx="42" cy="6.500" rx="6.300" ry="6" fill="#a9bfd2" stroke="#6b8cab" /><circle cx="42" cy="6.500" r="3" fill="#7ea0bf" />
                    <path d="M56 8V3Q58 0 61 3V6M66 6Q63 0 61.500 4" fill="none" stroke="#9a9410" strokeWidth="1.700" /><rect x="60" y="6" width="7.500" height="8.500" fill="#e4dc3c" stroke="#77700c" />
                  </svg>
                  <Swatch /><span className="pl-[5px]">0</span>
                </Combo>
                <Cells l="layermake layerprev" />
              </Bar>
              <Bar w="w-[591px]">
                <div className="w-[2px]" /><Combo w="w-[150px]"><Swatch /><span className="pl-[4px]">ByLayer</span></Combo><Sep />
                <Combo w="w-[160px]"><div className="mr-[5px] h-px w-[60px] bg-black" />ByLayer</Combo><Sep />
                <Combo w="w-[125px]"><div className="mr-[5px] h-px w-[35px] bg-black" />ByLayer</Combo><Sep />
                <div className="w-px" /><Combo w="w-[120px]" off><span className="flex-1 pl-[4px]">ByColor</span><div className="h-full w-px bg-white" /></Combo>
              </Bar>
            </div>

            <div className="flex h-[501px] shrink-0">
              <div className="w-[26px] pt-0"><VBar h="h-[435px]" l="line xline pline polygon rect arc circle cloud spline ellipse earc insert mkblock point hatch gradient region table mtext" /></div>
              <div className="flex w-[1267px] flex-col border-t-2 border-l-2 border-[#777]">
                <Drawing />
                <div className="flex h-[17px] w-[1264px] shrink-0 items-start border-b border-[#dcdcdc] font-['Liberation_Sans',sans-serif] text-[11px]">
                  {["M6 4V12M12 3.500V12.500L7 8Z", "M11 3.500V12.500L6 8Z", "M6 3.500V12.500L11 8Z", "M12 4V12M6 3.500V12.500L11 8Z"].map((d) => (
                    <div key={d} className="flex h-4 w-[18px] items-center justify-center border-r border-b border-[#a8a8a8] bg-[#fbfbfb]"><svg viewBox="0 0 18 16" className="h-4 w-[18px]"><path d={d} fill="#000" stroke="#000" strokeWidth=".9" /></svg></div>
                  ))}
                  <svg viewBox="110 618 160 16" className="h-4 w-[160px]">
                    <path d="M207 618L212 633H253L258 618Z" fill="#f8f8f8" stroke="#000" /><path d="M158 618L162 633H203L208 618Z" fill="#f8f8f8" stroke="#000" /><path d="M113 618L118 633.500H154L159 618Z" fill="#000" stroke="#000" />
                    <path d="M156.500 624L160 633M206.500 624L210 633" stroke="#000" />
                    <text x="121" y="630" fill="#fff" fontSize="11" fontFamily="Liberation Sans" textLength="28.500">Model</text>
                    <text x="162" y="630" fontSize="11" fontFamily="Liberation Sans" textLength="37.500">Layout1</text>
                    <text x="212" y="630" fontSize="11" fontFamily="Liberation Sans" textLength="38">Layout2</text>
                  </svg>
                </div>
              </div>
              <div className="ml-[2px] w-[26px]"><VBar h="h-[327px]" l="nview | top bottom left right front back | sw se ne nw | camera | vback" /></div>
              <div className="flex w-[25px] flex-col">
                <VBar h="h-[391px]" l="erase copyobj mirror offset array move rotate scale stretch trim extend breakpt breakk join chamfer fillet explode" />
                <div className="h-px" />
                <VBar h="h-[105px]" l="df1 df2 df3 df4" />
              </div>
            </div>

            <div className="h-[4px] shrink-0 border-b-2 border-[#747474] bg-[#f8f8f8]" />
            <div className="flex h-[54px] shrink-0 items-start pt-[8px]">
              <div className="flex h-[42px] w-[17px] shrink-0 gap-[2px] pl-[6px]"><div className="w-[3px] border-r border-l border-b border-r-[#a0a0a0] border-b-[#a0a0a0] border-l-white" /><div className="w-[3px] border-r border-l border-b border-r-[#a0a0a0] border-b-[#a0a0a0] border-l-white" /></div>
              <div className="flex h-[45px] w-[1322px] flex-col border-t-2 border-l border-[#696969] font-['Liberation_Mono',monospace] text-[13.33px] leading-[18px]">
                <div className="flex h-[24px] border-b border-[#8c8c8c] bg-white">
                  <div className="flex-1 pt-px whitespace-pre">Command: _qsave</div>
                  <div className="flex w-[18px] flex-col items-center justify-between bg-[#f0f0f0] py-[4px] pr-px"><div className="flex rotate-180"><Chevron /></div><Chevron /></div>
                </div>
                <div className="flex h-[19px] bg-white">
                  <div className="flex-1 pt-[2px]">Command:</div>
                  <div className="flex w-[70px] items-center justify-between bg-[#f0f0f0] pr-[5px] pl-[6px]"><div className="flex rotate-90"><Chevron /></div><div className="mr-[15px] h-[17px] w-[17px] bg-[#cdcdcd]" /><div className="flex -rotate-90"><Chevron /></div></div>
                  <div className="w-[18px] bg-[#f0f0f0]" />
                </div>
              </div>
            </div>
            <div className="flex h-[24px] shrink-0 items-start border-t border-[#9c9c9c] pt-[4px] font-['Liberation_Sans',sans-serif]">
              <div className="mr-[5px] ml-[5px] flex h-[18px] w-[159px] items-center border border-t-[#a0a0a0] border-r-white border-b-white border-l-[#a0a0a0] pt-px pl-px text-[11.5px] tracking-[-0.3px] whitespace-pre">17'-3.1",  16'-7.8" , 0'-0.0"</div>
              <div className="flex gap-[4px]">
                <Status t="SNAP" w="w-[33px]" /><Status t="GRID" w="w-[31px]" /><Status t="ORTHO" w="w-[43px]" on /><Status t="POLAR" w="w-[40px]" /><Status t="OSNAP" w="w-[41px]" on /><Status t="OTRACK" w="w-[48px]" on /><Status t="DUCS" w="w-[34px]" /><Status t="DYN" w="w-[26px]" /><Status t="LWT" w="w-[28px]" /><Status t="MODEL" w="w-[42px]" on />
              </div>
              <svg viewBox="1236 699 120 20" className="-mt-[2px] ml-auto h-5 w-[120px]">
                <path d="M1237.500 718V701.500H1300" stroke="#a0a0a0" fill="none" /><path d="M1237.500 718.500H1300.500V702" stroke="#fff" fill="none" />
                <path d="M1242 704Q1243 711 1249 709L1243 717H1250L1246 704ZM1246 706L1249 703" fill="#6a84a8" stroke="#34507a" /><path d="M1251 706L1257 717H1245Z" fill="#ffe020" stroke="#8a7400" strokeWidth=".8" /><path d="M1251 710V713M1251 714.500V716" stroke="#000" strokeWidth="1.300" />
                <path d="M1269 710V706Q1272 701 1275 705V709" fill="none" stroke="#807010" strokeWidth="2" /><rect x="1262" y="708" width="9" height="9" fill="#f0e020" stroke="#222" /><path d="M1262 711H1271M1262 714H1271" stroke="#665c00" />
                <path d="M1282 703H1289L1293 707V716H1282Z" fill="#7f9cb8" stroke="#2c4f74" /><path d="M1284 702V712M1287 704V712" stroke="#fff" /><circle cx="1292" cy="713" r="4.500" fill="#26b050" /><path d="M1289.500 713L1291.500 715L1295 711" stroke="#fff" strokeWidth="1.400" fill="none" />
                <path d="M1306 711H1314L1310 715.500Z" fill="#000" />
                <rect x="1323.500" y="701.500" width="15" height="15" fill="#fff" stroke="#123e66" strokeWidth="1.400" /><rect x="1326" y="704" width="10" height="10" fill="url(#face)" stroke="#2f6ca8" />
                <g fill="#bdbdbd"><rect x="1352" y="710" width="2" height="2" /><rect x="1349" y="713" width="2" height="2" /><rect x="1352" y="713" width="2" height="2" /><rect x="1346" y="716" width="2" height="2" /><rect x="1349" y="716" width="2" height="2" /><rect x="1352" y="716" width="2" height="2" /></g>
              </svg>
            </div>
          </div>
        </div>
        <div className="flex w-[2px] flex-col"><div className="h-[68px] bg-[#dcdfe4]" /><div className="h-[601px] bg-black" /><div className="h-[57px] bg-[#e4e4e5]" /></div>
      </div>
      <Taskbar />
    </div>
  );
}
